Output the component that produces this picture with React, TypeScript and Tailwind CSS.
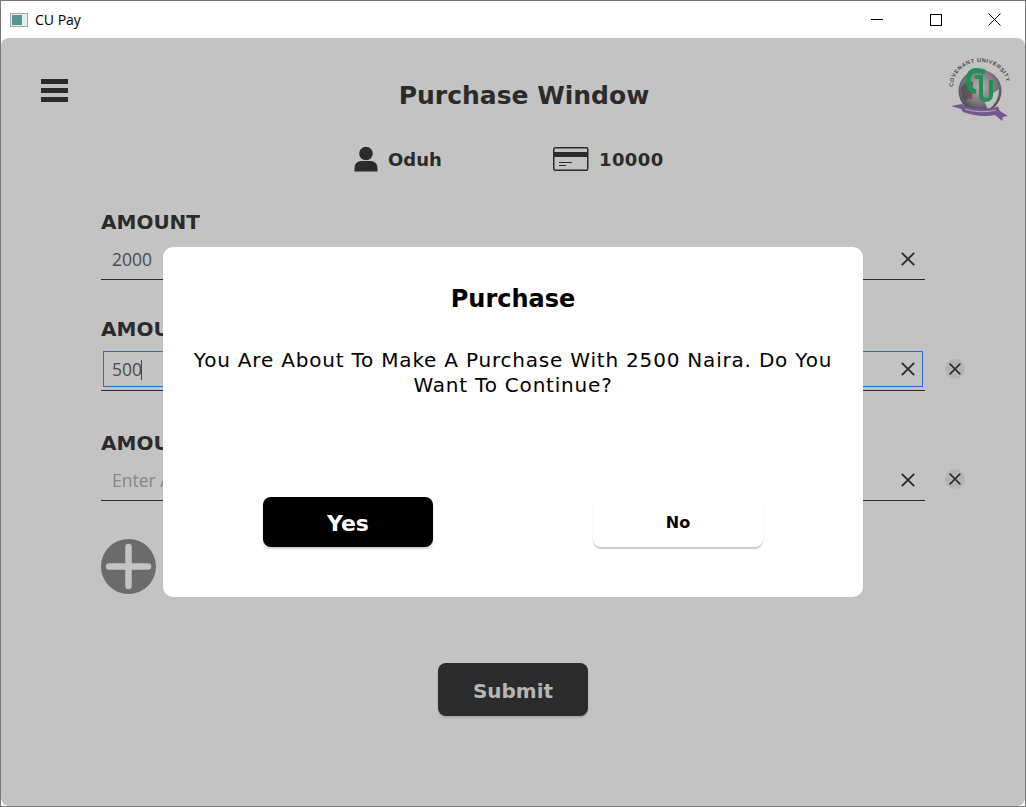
import React from 'react';

const dejavu = "font-['DejaVu_Sans',Verdana,sans-serif]";

const CloseIcon: React.FC<{ size?: number }> = ({ size = 14 }) => (
  <svg width={size} height={size} viewBox="0 0 14 14" fill="none" stroke="#2e2e2e" strokeWidth="1.9">
    <path d="M0.8 0.8L13.2 13.2M13.2 0.8L0.8 13.2" />
  </svg>
);

const Logo: React.FC = () => (
  <svg className="overflow-visible" width="62" height="64" viewBox="0 0 62 64">
    <defs>
      <path id="logo-arc" d="M5 29A27 25 0 0 1 59 29" />
      <radialGradient id="logo-globe" cx="50%" cy="40%" r="62%">
        <stop offset="0%" stopColor="#b7b2b6" />
        <stop offset="65%" stopColor="#77727a" />
        <stop offset="100%" stopColor="#3f3c44" />
      </radialGradient>
    </defs>
    <text fontSize="5.6" fontWeight="bold" fontFamily="'Liberation Sans', sans-serif" fill="#4a4a4a" textLength="76" lengthAdjust="spacing">
      <textPath href="#logo-arc">COVENANT UNIVERSITY</textPath>
    </text>
    <circle cx="32" cy="33" r="21.5" fill="url(#logo-globe)" />
    <path d="M13 30Q18 22 25 24L24 37L17 43Q13 37 13 30Z" fill="#4c4850" opacity="0.75" />
    <path d="M36 42L51 31Q51 45 40 52Z" fill="#dedcde" opacity="0.75" />
    <path d="M37 14Q20 8 20 23Q20 32 28 34" fill="none" stroke="#1f9153" strokeWidth="4.8" />
    <path d="M27 19H33V37Q33 42 37 42Q43 42 43 37V22" fill="none" stroke="#1f9153" strokeWidth="4" />
    <rect x="21" y="35" width="3" height="6" fill="#a33a44" />
    <path d="M3 48L14 46L18 48.5Q33 53 50 48.5L52 53L60 58L55 59L54 63L47 57Q32 60 15 54L13 51Z" fill="#75588f" />
    <path d="M17 51Q33 56 48 52" fill="none" stroke="#c9bcd3" strokeWidth="0.8" />
  </svg>
);

const Field: React.FC<{
  value?: string;
  placeholder?: string;
  focused?: boolean;
  removable?: boolean;
  className?: string;
}> = ({ value, placeholder, focused, removable, className = '' }) => (
  <div className={className}>
    <div className={`${dejavu} h-6 text-[20px] leading-6 font-bold text-[#2b2b2b]`}>AMOUNT</div>
    <div className="flex items-center">
      <div className={`w-[824px] border-b-[1.5px] border-[#2b2b2b] ${focused ? 'h-[50px] px-[2px] pt-[10px] pb-[3px]' : 'h-[46px] pt-[5px]'}`}>
        <div className={`flex h-full items-center justify-between ${focused ? 'border border-[#2b6ccf] pr-[7px] pl-[8px]' : 'pr-[10px] pl-[11px]'}`}>
          <span className={`font-['Open_Sans',sans-serif] text-[17.5px] ${placeholder ? 'text-[#858585]' : 'text-[#4a4a4a]'}`}>
            {value ?? placeholder}
            {focused && <span className="ml-[-1px] inline-block h-[20px] w-px translate-y-[4px] bg-[#444444]" />}
          </span>
          <CloseIcon />
        </div>
      </div>
      {removable && (
        <div className={`ml-5 flex h-5 w-5 items-center justify-center rounded-full bg-[#b4b4b4] ${focused ? 'mt-[6px]' : 'mt-[2px]'}`}>
          <CloseIcon size={12} />
        </div>
      )}
    </div>
  </div>
);

export default function App() {
  return (
    <div className="flex h-[807px] w-[1026px] flex-col overflow-hidden border border-[#777777] bg-white">
      <div className="flex h-[37px] shrink-0 items-center justify-between bg-white">
        <div className="flex items-center gap-[7px] pl-[9px]">
          <div className="flex h-[14px] w-[18px] border border-[#a8a8a8] bg-[#e8eeee] p-px">
            <div className="h-full w-[10px] bg-gradient-to-br from-[#5c8fb0] to-[#4f9a74]" />
          </div>
          <span className="font-['Open_Sans',sans-serif] text-[14px] text-black">CU Pay</span>
        </div>
        <div className="flex items-center pr-px">
          <div className="flex h-[37px] w-[59px] items-center justify-center">
            <div className="h-px w-3 bg-black" />
          </div>
          <div className="flex h-[37px] w-[59px] items-center justify-center">
            <div className="h-3 w-3 border border-black" />
          </div>
          <div className="flex h-[37px] w-[59px] items-center justify-center">
            <svg width="13" height="13" viewBox="0 0 13 13" fill="none" stroke="#000000" strokeWidth="1">
              <path d="M0.5 0.5L12.5 12.5M12.5 0.5L0.5 12.5" />
            </svg>
          </div>
        </div>
      </div>

      <main className="relative flex-1 rounded-[8px] bg-[#c3c3c3]">
        <header className="mt-5 grid h-[62px] grid-cols-[1fr_auto_1fr]">
          <div className="pt-[21px] pl-10">
            <div className="flex w-[27px] flex-col gap-1">
              <div className="h-[5px] bg-[#2b2b2b]" />
              <div className="h-[5px] bg-[#2b2b2b]" />
              <div className="h-[5px] bg-[#2b2b2b]" />
            </div>
          </div>
          <h1 className={`${dejavu} pt-[22px] pl-[22px] text-[25px] leading-8 font-bold text-[#2b2b2b]`}>Purchase Window</h1>
          <div className="flex justify-end pr-[15px]">
            <Logo />
          </div>
        </header>

        <div className={`${dejavu} mt-6 flex h-[30px] items-center pl-[353px] text-[18px] font-bold text-[#2b2b2b]`}>
          <svg width="24" height="26" viewBox="0 0 24 26" fill="#2b2b2b">
            <circle cx="12" cy="7.5" r="6.8" />
            <path d="M0.5 25.5V22Q0.5 16 7 15H17Q23.5 16 23.5 22V25.5Z" />
          </svg>
          <span className="ml-[10px] w-[165px]">Oduh</span>
          <svg width="36" height="26" viewBox="0 0 36 26" fill="none">
            <rect x="0.75" y="1.75" width="34" height="22.5" rx="1.5" stroke="#2b2b2b" strokeWidth="1.5" />
            <rect x="1" y="6" width="34" height="5" fill="#2b2b2b" />
            <path d="M6 16.5H19M6 19.5H13" stroke="#2b2b2b" strokeWidth="1.2" />
          </svg>
          <span className="ml-[10px] tracking-[0.4px]">10000</span>
        </div>

        <form className="mt-9 pl-[100px]">
          <Field value="2000" />
          <Field value="500" focused removable className="mt-[37px]" />
          <Field placeholder="Enter Amount" removable className="mt-10" />
          <svg className="mt-[38px] block" width="55" height="55" viewBox="0 0 55 55">
            <circle cx="27.5" cy="27.5" r="27.5" fill="#6b6b6b" />
            <path d="M8 27.5H47M27.5 8V47" stroke="#c3c3c3" strokeWidth="6.5" strokeLinecap="round" />
          </svg>
          <div className="mt-[69px] pl-[337px]">
            <button type="button" className={`${dejavu} h-[53px] w-[150px] rounded-[8px] bg-[#2b2b2b] pt-[2px] text-[20px] font-bold text-[#b5b5b5] shadow-[0_2px_2px_rgba(0,0,0,0.15)]`}>
              Submit
            </button>
          </div>
        </form>

        <div className={`${dejavu} absolute top-[209px] left-[162px] flex h-[350px] w-[700px] flex-col items-center rounded-[10px] bg-white text-black`}>
          <h2 className="mt-[37px] text-[24px] leading-[30px] font-bold">Purchase</h2>
          <p className="mt-[34px] w-[660px] text-center text-[20px] leading-[25px] tracking-[0.8px]">
            You Are About To Make A Purchase With 2500 Naira. Do You Want To Continue?
          </p>
          <div className="mt-[99px] flex w-full justify-between px-[100px]">
            <button type="button" className="h-[50px] w-[170px] rounded-[8px] bg-black pt-[2px] text-[22px] font-bold text-white shadow-[0_2px_2px_rgba(0,0,0,0.2)]">
              Yes
            </button>
            <button type="button" className="h-[50px] w-[170px] rounded-[8px] bg-white pt-[2px] text-[16px] font-bold text-black shadow-[0_2px_1px_rgba(0,0,0,0.2)]">
              No
            </button>
          </div>
        </div>
      </main>
    </div>
  );
}
